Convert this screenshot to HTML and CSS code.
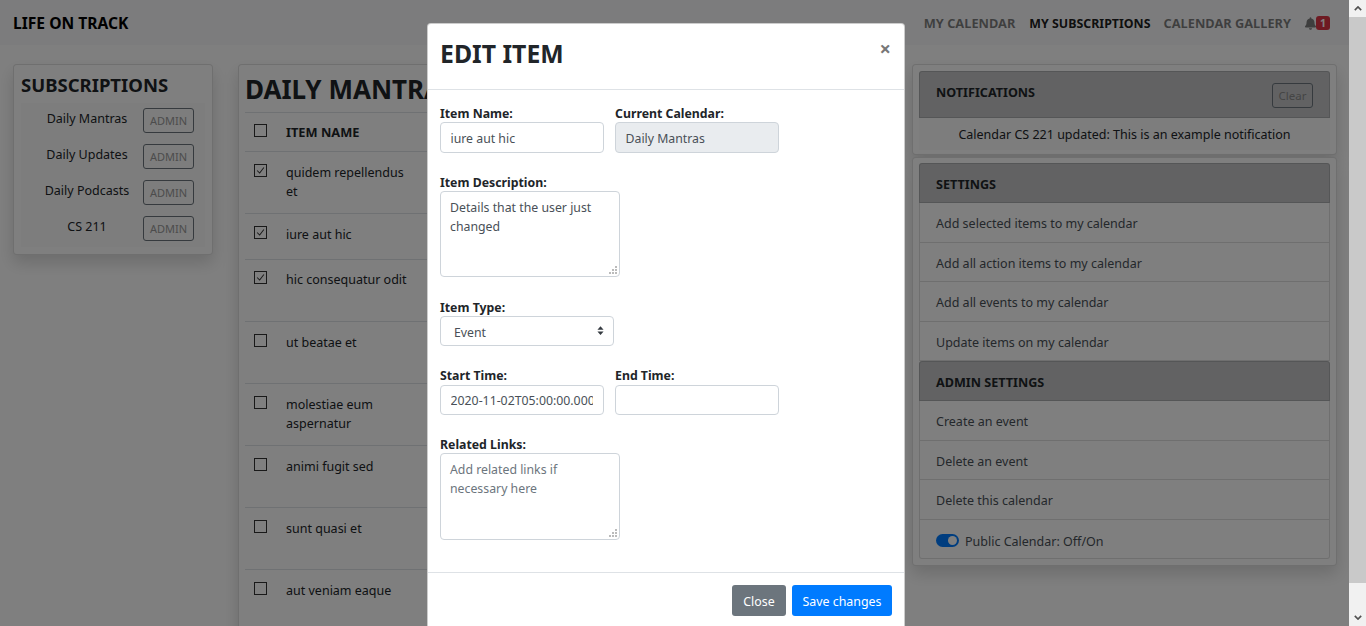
FILE: index.html
```html
<!DOCTYPE html>
<html lang="en">
<head>
<meta charset="utf-8">
<title>Life on Track</title>
<link rel="stylesheet" href="styles.css">
</head>
<body>
<div class="app">
  <div class="page">
    <nav class="navbar">
      <a class="brand">LIFE ON TRACK</a>
      <div class="nav-links">
        <a class="nav-link">MY CALENDAR</a>
        <a class="nav-link active">MY SUBSCRIPTIONS</a>
        <a class="nav-link">CALENDAR GALLERY</a>
        <span class="bell">
          <svg class="bell-icon" viewBox="0 0 448 512"><path d="M224 512c35.32 0 63.97-28.65 63.97-64H160.03c0 35.35 28.65 64 63.97 64zm215.39-149.71c-19.32-20.76-55.47-51.99-55.47-154.29 0-77.7-54.48-139.9-127.94-155.16V32c0-17.67-14.32-32-31.98-32s-31.98 14.33-31.98 32v20.84C118.56 68.1 64.08 130.3 64.08 208c0 102.3-36.15 133.53-55.47 154.29-6 6.45-8.66 14.16-8.61 21.71.11 16.4 12.98 32 32.1 32h383.8c19.12 0 32-15.6 32.1-32 .05-7.55-2.61-15.27-8.61-21.71z"/></svg>
          <span class="badge">1</span>
        </span>
      </div>
    </nav>
    <main class="main">
      <aside class="card subs">
        <h3 class="subs-title">SUBSCRIPTIONS</h3>
        <div class="subs-list">
          <div class="subs-row"><span class="subs-name">Daily Mantras</span><button class="btn-admin">ADMIN</button></div>
          <div class="subs-row"><span class="subs-name">Daily Updates</span><button class="btn-admin">ADMIN</button></div>
          <div class="subs-row"><span class="subs-name">Daily Podcasts</span><button class="btn-admin">ADMIN</button></div>
          <div class="subs-row"><span class="subs-name">CS 211</span><button class="btn-admin">ADMIN</button></div>
        </div>
      </aside>
      <section class="card items">
        <h2 class="items-title">DAILY MANTRAS</h2>
        <div class="item-row head"><span class="check"></span><span class="item-name">ITEM NAME</span></div>
        <div class="item-row r62"><span class="check"><svg viewBox="0 0 13 13"><path d="M2.5 6.5l3 3 5-6.5"/></svg></span><span class="item-name">quidem repellendus et</span></div>
        <div class="item-row r46"><span class="check"><svg viewBox="0 0 13 13"><path d="M2.5 6.5l3 3 5-6.5"/></svg></span><span class="item-name">iure aut hic</span></div>
        <div class="item-row r62 tight"><span class="check"><svg viewBox="0 0 13 13"><path d="M2.5 6.5l3 3 5-6.5"/></svg></span><span class="item-name">hic consequatur odit</span></div>
        <div class="item-row r62"><span class="check"></span><span class="item-name">ut beatae et</span></div>
        <div class="item-row r62"><span class="check"></span><span class="item-name">molestiae eum aspernatur</span></div>
        <div class="item-row r62"><span class="check"></span><span class="item-name">animi fugit sed</span></div>
        <div class="item-row r62"><span class="check"></span><span class="item-name">sunt quasi et</span></div>
        <div class="item-row r62"><span class="check"></span><span class="item-name">aut veniam eaque</span></div>
      </section>
      <aside class="side">
        <div class="card side-card notif-card">
          <div class="panel-head notif-head"><span>NOTIFICATIONS</span><button class="btn-clear">Clear</button></div>
          <div class="notif-body">Calendar CS 221 updated: This is an example notification</div>
        </div>
        <div class="card side-card">
          <div class="panel-head">SETTINGS</div>
          <div class="panel-item">Add selected items to my calendar</div>
          <div class="panel-item">Add all action items to my calendar</div>
          <div class="panel-item">Add all events to my calendar</div>
          <div class="panel-item">Update items on my calendar</div>
          <div class="panel-head">ADMIN SETTINGS</div>
          <div class="panel-item">Create an event</div>
          <div class="panel-item">Delete an event</div>
          <div class="panel-item">Delete this calendar</div>
          <div class="panel-item toggle-item"><span class="toggle"><span class="knob"></span></span>Public Calendar: Off/On</div>
        </div>
      </aside>
    </main>
    <div class="backdrop"></div>
    <div class="modal">
      <header class="modal-head">
        <h4 class="modal-title">EDIT ITEM</h4>
        <span class="close">×</span>
      </header>
      <form class="modal-body">
        <div class="form-row first">
          <label class="field"><span class="lbl">Item Name:</span><input class="control" value="iure aut hic"></label>
          <label class="field"><span class="lbl">Current Calendar:</span><input class="control" value="Daily Mantras" disabled></label>
        </div>
        <div class="form-row">
          <label class="field wide"><span class="lbl">Item Description:</span>
            <span class="area-wrap"><textarea class="control area">Details that the user just changed</textarea><svg class="grip" viewBox="0 0 8 8"><path d="M6 0h2v2H6zM3 3h2v2H3zM6 3h2v2H6zM0 6h2v2H0zM3 6h2v2H3zM6 6h2v2H6z"/></svg></span>
          </label>
        </div>
        <div class="form-row">
          <label class="field sel"><span class="lbl">Item Type:</span>
            <span class="control select">Event<svg class="updown" viewBox="0 0 8 10"><path d="M4 0L7.5 4H.5zM4 10L.5 6h7z"/></svg></span>
          </label>
        </div>
        <div class="form-row row-time">
          <label class="field"><span class="lbl">Start Time:</span><input class="control" value="2020-11-02T05:00:00.000Z"></label>
          <label class="field"><span class="lbl">End Time:</span><input class="control"></label>
        </div>
        <div class="form-row row-links">
          <label class="field wide"><span class="lbl">Related Links:</span>
            <span class="area-wrap"><textarea class="control area" placeholder="Add related links if necessary here"></textarea><svg class="grip" viewBox="0 0 8 8"><path d="M6 0h2v2H6zM3 3h2v2H3zM6 3h2v2H6zM0 6h2v2H0zM3 6h2v2H3zM6 6h2v2H6z"/></svg></span>
          </label>
        </div>
      </form>
      <footer class="modal-foot">
        <button class="btn btn-gray">Close</button>
        <button class="btn btn-blue">Save changes</button>
      </footer>
    </div>
  </div>
  <div class="scrollbar">
    <span class="sb-btn"><svg viewBox="0 0 10 6"><path d="M1 5l4-4 4 4"/></svg></span>
    <span class="sb-thumb"></span>
    <span class="sb-rest"></span>
    <span class="sb-btn"><svg viewBox="0 0 10 6"><path d="M1 1l4 4 4-4"/></svg></span>
  </div>
</div>
</body>
</html>
```
FILE: styles.css
```css
* { box-sizing: border-box; }
html, body { margin: 0; height: 100%; overflow: hidden; }
body { font-family: "Noto Sans", "Open Sans", sans-serif; font-size: 12.5px; line-height: 19px; color: #212529; background: #fff; }
.app { display: flex; height: 626px; }
.page { position: relative; flex: 1; min-width: 0; overflow: hidden; }

.navbar { display: flex; align-items: center; justify-content: space-between; height: 44.5px; padding: 2px 20px 0 13px; background: #f8f9fa; }
.brand { font-size: 15.6px; font-weight: 700; color: #000; }
.nav-links { display: flex; align-items: center; gap: 13px; }
.nav-link { font-size: 12.8px; font-weight: 700; color: rgba(0,0,0,.5); }
.nav-link.active { font-size: 12.4px; margin-left: 1px; color: rgba(0,0,0,.9); }
.bell { display: flex; align-items: center; margin: 0 -1px 0 1px; }
.bell-icon { width: 11px; height: 13px; fill: rgba(0,0,0,.5); }
.badge { display: block; width: 14px; height: 14px; border-radius: 3px; background: #dc3545; color: #fff; font-size: 10.5px; font-weight: 700; line-height: 14px; text-align: center; }

.main { display: flex; align-items: flex-start; gap: 25px; padding: 19.5px 12px 0 13px; }
.card { background: #fff; border: 1px solid rgba(0,0,0,.125); border-radius: 4px; box-shadow: 0 8px 16px rgba(0,0,0,.15); }

.subs { flex: none; width: 200px; height: 191px; padding: 7px; }
.subs-title { margin: 0; font-size: 18.5px; line-height: 26px; font-weight: 700; color: #212529; }
.subs-list { height: 144px; margin-top: 5px; padding: 5px 11px 0 10px; background: rgba(0,0,0,.02); }
.subs-row { display: flex; align-items: flex-start; height: 36px; }
.subs-name { flex: 1; text-align: center; padding-top: .5px; color: #212529; }
.btn-admin { width: 51px; height: 25px; padding: 0; border: 1px solid #6c757d; border-radius: 3px; background: transparent; color: #999; font: 11px "Noto Sans", sans-serif; }

.items { flex: 1; min-width: 0; height: 620px; padding: 6px 6px 0; }
.items-title { margin: 0; height: 41px; font-size: 26px; line-height: 36px; font-weight: 700; color: #212529; white-space: nowrap; }
.item-row { display: flex; align-items: flex-start; padding: 12px 0 0 9px; border-top: 1px solid #dee2e6; }
.item-row.head { height: 39px; padding-top: 11px; }
.item-row.tight { padding-top: 11px; }
.r62 { height: 62px; }
.r46 { height: 46px; }
.check { flex: none; width: 13px; height: 13px; border: 1px solid #333; }
.check svg { display: block; width: 11px; height: 11px; fill: none; stroke: #333; stroke-width: 1.2; }
.item-name { width: 125px; margin-left: 19px; margin-top: -1px; color: #212529; }
.head .item-name { font-size: 12.8px; font-weight: 700; }

.side { flex: none; display: flex; flex-direction: column; gap: 2px; width: 425px; }
.side-card { padding: 5px 6px 6px; }
.notif-card { padding: 6px 6px 4px; }
.panel-head { display: flex; align-items: center; height: 40px; padding: 2px 16px 0; background: #c4c5c7; border: 1px solid rgba(0,0,0,.125); border-radius: 3px 3px 0 0; font-size: 12.6px; font-weight: 700; color: #212529; }
.notif-head { justify-content: space-between; align-items: flex-start; height: 47px; padding-top: 11px; }
.btn-clear { width: 41px; height: 25px; padding: 0; border: 1px solid #6c757d; border-radius: 3px; background: transparent; color: #8a8a8a; font: 11.5px "Noto Sans", sans-serif; }
.notif-body { height: 32px; padding-top: 7px; text-align: center; background: rgba(0,0,0,.02); color: #212529; }
.panel-item { height: 39.5px; padding: 11px 16px 0; border: 1px solid rgba(0,0,0,.125); border-top: 0; background: #fff; color: #495057; }
.toggle-item { display: flex; align-items: flex-start; gap: 6px; padding-top: 12px; border-radius: 0 0 3px 3px; }
.toggle { flex: none; position: relative; width: 23px; height: 13px; margin-top: 2px; border-radius: 7px; background: #007bff; }
.knob { position: absolute; top: 2px; right: 2px; width: 9px; height: 9px; border-radius: 50%; background: #fff; }

.backdrop { position: absolute; inset: 0; background: rgba(0,0,0,.5); }
.modal { position: absolute; top: 23px; left: 427px; width: 478px; height: 640px; display: flex; flex-direction: column; background: #fff; border: 1px solid rgba(0,0,0,.2); border-radius: 4px; }
.modal-head { display: flex; justify-content: space-between; height: 66px; padding: 11px 12px 0; border-bottom: 1px solid #dee2e6; }
.modal-title { margin: 0; font-size: 24.8px; line-height: 36px; font-weight: 700; color: #212529; }
.close { font-size: 20px; line-height: 28px; font-weight: 700; color: #777; margin-right: 1px; }
.modal-body { flex: none; height: 482px; padding: 15px 12px 0; }
.form-row { display: flex; gap: 11.5px; margin-top: 21.5px; }
.form-row.first { margin-top: 0; }
.form-row.row-time { margin-top: 21.5px; }
.row-time .lbl { height: 18px; }
.form-row.row-links { margin-top: 21px; }
.row-links .area { height: 87px; }
.field { display: block; width: 163.5px; }
.field.wide { width: 180px; }
.field.sel { width: 174px; }
.lbl { display: block; height: 17px; font-size: 12.3px; line-height: 17px; font-weight: 700; color: #212529; }
.control { display: block; width: 100%; height: 30px; padding: 0 9.5px; border: 1px solid #ced4da; border-radius: 4px; background: #fff; color: #495057; font: 12.3px/19px "Noto Sans", sans-serif; outline: 0; }
.first .control { height: 30.5px; padding-top: 2px; }
.control:disabled { background: #e9ecef; opacity: 1; }
.area-wrap { display: block; position: relative; }
.area { height: 86px; padding: 6px 9px; resize: none; margin: 0; }
.area::placeholder { color: #6c757d; opacity: 1; }
.grip { position: absolute; right: 3.5px; bottom: 3px; width: 8px; height: 8px; fill: #bbb; }
.select { display: flex; align-items: center; justify-content: space-between; height: 30px; padding: 4px 9px 0 13px; }
.updown { width: 7px; height: 9px; margin-top: -4px; fill: #343a40; }
.modal-foot { flex: none; display: flex; justify-content: flex-end; gap: 6px; height: 60px; padding: 12px 12px 0; border-top: 1px solid #dee2e6; }
.btn { height: 31px; padding: 1px 10.5px 0; border: 0; border-radius: 3px; color: #fff; font: 12.4px "Noto Sans", sans-serif; }
.btn-gray { width: 54px; padding-left: 0; padding-right: 0; background: #6c757d; }
.btn-blue { background: #007bff; }

.scrollbar { flex: none; width: 17px; height: 626px; display: flex; flex-direction: column; background: #f1f1f1; }
.sb-btn { flex: none; display: flex; align-items: center; justify-content: center; height: 17px; }
.sb-btn svg { width: 8px; height: 5px; fill: none; stroke: #505050; stroke-width: 2; }
.sb-thumb { flex: none; height: 566px; background: #c9c9c9; }
.sb-rest { flex: 1; }
```
